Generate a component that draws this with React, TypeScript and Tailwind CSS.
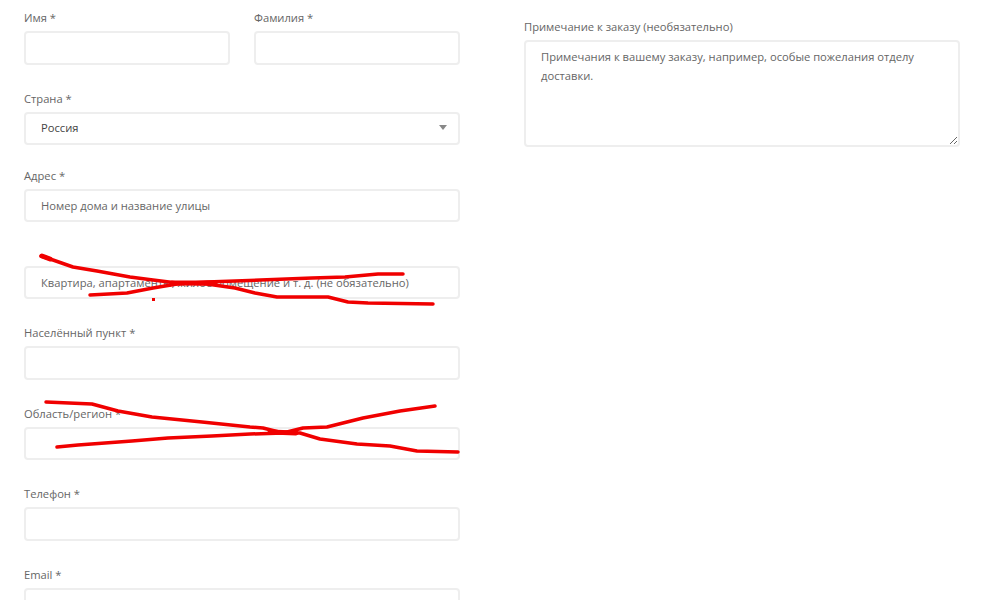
/**
 * Checkout billing form
 * Billing fields on the left, order note on the right, red marker scribbles on top
 */

const labelClass = 'block text-[11.2px] leading-[18px] text-[#666666] mb-[4px]'

const inputClass =
  'block w-full border-2 border-[#eeeeee] rounded-[4px] bg-white px-[15px] text-[11.2px] text-[#555555] placeholder:text-[#666666] outline-none'

function Field({ label, placeholder, h = 'h-[34px]', className = '' }: { label: string; placeholder?: string; h?: string; className?: string }) {
  return (
    <div className={className}>
      <label className={labelClass}>{label}</label>
      <input className={`${inputClass} ${h}`} placeholder={placeholder} />
    </div>
  )
}

const strokes = [
  { w: 3.5, d: 'M41 256 L53 260 L73 267 L97 271 L130 277 L153 280 L177 283 L207 284 L235 288 L255 293 L277 297 L328 297 L348 302 L368 303 L433 304' },
  { w: 3.5, d: 'M90 295 L127 293 L153 288 L177 284 L207 282 L235 281 L312 278 L345 277 L378 274 L403 274' },
  { w: 3.5, d: 'M46 402 L92 404 L118 411 L152 417 L202 422 L250 427 L263 428 L283 433 L300 433 L320 439 L357 444 L390 446 L417 451 L458 452' },
  { w: 3.5, d: 'M57 447 L78 445 L132 441 L168 438 L212 436 L250 434 L283 433 L303 428 L327 427 L363 418 L400 411 L435 406' },
  // thicker blobs where the pen lingered
  { w: 5, d: 'M42 256 L50 259' },
  { w: 5, d: 'M172 283 L215 283' },
  { w: 5, d: 'M270 432 L296 433' },
]

export default function App() {
  return (
    <div className="relative h-[600px] overflow-hidden bg-white font-['Open_Sans',sans-serif]">
      <div className="flex gap-[64px] pl-[24px] pt-[9px]">
        {/* Billing fields */}
        <div className="w-[436px] shrink-0">
          <div className="flex gap-[24px]">
            <Field label="Имя *" className="flex-1" />
            <Field label="Фамилия *" className="flex-1" />
          </div>

          <div className="mt-[25px]">
            <label className={labelClass}>Страна *</label>
            <div className="relative h-[33px] border-2 border-[#eeeeee] rounded-[4px] flex items-center px-[15px] text-[11.2px] text-[#444444]">
              Россия
              <span className="absolute right-[11px] top-[11px] w-0 h-0 border-x-[4px] border-x-transparent border-t-[5px] border-t-[#888888]" />
            </div>
          </div>

          <Field label="Адрес *" placeholder="Номер дома и название улицы" h="h-[33px]" className="mt-[22px]" />
          <input className={`${inputClass} h-[33px] mt-[44px]`} placeholder="Квартира, апартаменты, жилое помещение и т. д. (не обязательно)" />
          <Field label="Населённый пункт *" className="mt-[25px]" />
          <Field label="Область/регион *" h="h-[33px]" className="mt-[25px]" />
          <Field label="Телефон *" className="mt-[25px]" />
          <Field label="Email *" className="mt-[25px]" />
        </div>

        {/* Order note */}
        <div className="w-[436px] shrink-0 pt-[9px]">
          <label className={labelClass}>Примечание к заказу (необязательно)</label>
          <textarea
            className="block w-full h-[107px] border-2 border-[#eeeeee] rounded-[4px] bg-white px-[15px] py-[5px] text-[11.2px] leading-[19px] text-[#555555] placeholder:text-[#666666] outline-none"
            placeholder="Примечания к вашему заказу, например, особые пожелания отделу доставки."
          />
        </div>
      </div>

      {/* Marker scribbles */}
      <svg className="absolute inset-0 pointer-events-none" width="996" height="600" fill="none" stroke="#f00000" strokeLinecap="round" strokeLinejoin="round">
        {strokes.map((s, i) => (
          <path key={i} d={s.d} strokeWidth={s.w} />
        ))}
        <rect x="152" y="298" width="3" height="3" fill="#f00000" stroke="none" />
      </svg>
    </div>
  )
}
